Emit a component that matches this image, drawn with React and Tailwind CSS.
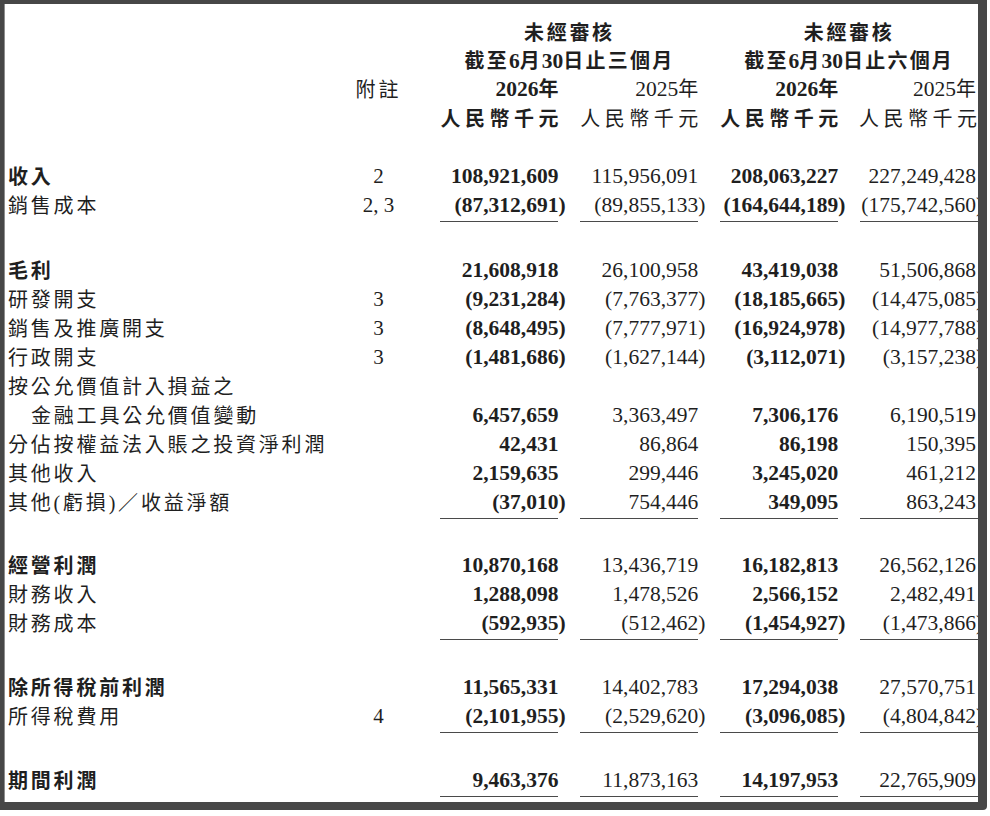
import React from "react";

const FONT = { fontFamily: '"Liberation Serif", "Noto Sans CJK TC", serif' };

const sections = [
  {
    gap: 34,
    rows: [
      { label: "收入", bold: true, note: "2", v: ["108,921,609", "115,956,091", "208,063,227", "227,249,428"] },
      { label: "銷售成本", note: "2, 3", v: ["(87,312,691)", "(89,855,133)", "(164,644,189)", "(175,742,560)"] },
    ],
  },
  {
    gap: 32,
    rows: [
      { label: "毛利", bold: true, v: ["21,608,918", "26,100,958", "43,419,038", "51,506,868"] },
      { label: "研發開支", note: "3", v: ["(9,231,284)", "(7,763,377)", "(18,185,665)", "(14,475,085)"] },
      { label: "銷售及推廣開支", note: "3", v: ["(8,648,495)", "(7,777,971)", "(16,924,978)", "(14,977,788)"] },
      { label: "行政開支", note: "3", v: ["(1,481,686)", "(1,627,144)", "(3,112,071)", "(3,157,238)"] },
      { label: "按公允價值計入損益之", v: ["", "", "", ""] },
      { label: "金融工具公允價值變動", indent: true, v: ["6,457,659", "3,363,497", "7,306,176", "6,190,519"] },
      { label: "分佔按權益法入賬之投資淨利潤", v: ["42,431", "86,864", "86,198", "150,395"] },
      { label: "其他收入", v: ["2,159,635", "299,446", "3,245,020", "461,212"] },
      { label: "其他(虧損)／收益淨額", v: ["(37,010)", "754,446", "349,095", "863,243"] },
    ],
  },
  {
    gap: 33,
    rows: [
      { label: "經營利潤", bold: true, v: ["10,870,168", "13,436,719", "16,182,813", "26,562,126"] },
      { label: "財務收入", v: ["1,288,098", "1,478,526", "2,566,152", "2,482,491"] },
      { label: "財務成本", v: ["(592,935)", "(512,462)", "(1,454,927)", "(1,473,866)"] },
    ],
  },
  {
    gap: 33,
    rows: [
      { label: "除所得稅前利潤", bold: true, v: ["11,565,331", "14,402,783", "17,294,038", "27,570,751"] },
      { label: "所得稅費用", note: "4", v: ["(2,101,955)", "(2,529,620)", "(3,096,085)", "(4,804,842)"] },
    ],
  },
  {
    gap: 0,
    rows: [
      { label: "期間利潤", bold: true, v: ["9,463,376", "11,873,163", "14,197,953", "22,765,909"] },
    ],
  },
];

const colW = ["w-[138px]", "w-[140px]", "w-[140px]", "w-[140px] pr-[2px]"];
const lineW = ["w-[138px]", "w-[140px]", "w-[140px]", "w-[140px]"];

function Num({ value, bold }) {
  if (!value) return null;
  const neg = value.endsWith(")");
  const body = neg ? value.slice(0, -1) : value;
  return (
    <span className={`whitespace-nowrap text-[21.5px] ${bold ? "font-bold" : "font-normal"}`}>
      {body}
      {neg && <span className="inline-block w-0">)</span>}
    </span>
  );
}

function DataRow({ row }) {
  return (
    <div className="flex h-[29px] items-center text-[20px] leading-none text-[#1f1f1f]">
      <div
        className={`w-[332px] pl-[3px] whitespace-nowrap tracking-[2.8px] ${row.bold ? "font-bold" : "font-normal"}`}
      >
        <span className={row.indent ? "ml-[23px]" : ""}>{row.label}</span>
      </div>
      <div className="w-[84px] text-center whitespace-nowrap text-[21px]">{row.note || ""}</div>
      {row.v.map((val, i) => (
        <div key={i} className={`${colW[i]} flex justify-end`}>
          <Num value={val} bold={i % 2 === 0} />
        </div>
      ))}
    </div>
  );
}

function Underline() {
  return (
    <div className="flex mt-[1px]">
      <div className="w-[332px]" />
      <div className="w-[84px]" />
      {lineW.map((w, i) => (
        <div key={i} className={`${w} flex justify-end`}>
          <div className="w-[118px] h-px bg-[#4a4a4a]" />
        </div>
      ))}
    </div>
  );
}

function Spread({ text, bold }) {
  return (
    <div className={`w-[118px] flex justify-between ${bold ? "font-bold" : "font-normal"}`}>
      {text.split("").map((c, i) => (
        <span key={i}>{c}</span>
      ))}
    </div>
  );
}

function Year({ y, bold }) {
  return (
    <span className={`whitespace-nowrap ${bold ? "font-bold" : "font-normal"}`}>
      <span className="text-[21.5px]">{y}</span>年
    </span>
  );
}

function Header() {
  return (
    <div className="pt-[15px] text-[20px] leading-none text-[#1f1f1f]">
      <div className="flex h-[28px] items-center font-bold">
        <div className="w-[416px]" />
        <div className="w-[278px] pl-[20px] flex justify-center tracking-[2.7px]">未經審核</div>
        <div className="w-[280px] pl-[22px] flex justify-center tracking-[2.7px]">未經審核</div>
      </div>
      <div className="flex h-[29px] items-center font-bold">
        <div className="w-[416px]" />
        <div className="w-[278px] pl-[20px] flex justify-center tracking-[2.2px] whitespace-nowrap">
          截至<span className="text-[21.5px] tracking-normal">6</span>月<span className="text-[21.5px] tracking-normal">30</span>日止三個月
        </div>
        <div className="w-[280px] pl-[22px] flex justify-center tracking-[2.2px] whitespace-nowrap">
          截至<span className="text-[21.5px] tracking-normal">6</span>月<span className="text-[21.5px] tracking-normal">30</span>日止六個月
        </div>
      </div>
      <div className="flex h-[28px] items-center">
        <div className="w-[332px]" />
        <div className="w-[84px] text-center tracking-[3px]">附註</div>
        <div className="w-[138px] flex justify-end">
          <Year y="2026" bold />
        </div>
        <div className="w-[140px] flex justify-end">
          <Year y="2025" />
        </div>
        <div className="w-[140px] flex justify-end">
          <Year y="2026" bold />
        </div>
        <div className="w-[140px] flex justify-end pr-[2px]">
          <Year y="2025" />
        </div>
      </div>
      <div className="flex h-[29px] items-center">
        <div className="w-[332px]" />
        <div className="w-[84px]" />
        <div className="w-[138px] flex justify-end">
          <Spread text="人民幣千元" bold />
        </div>
        <div className="w-[140px] flex justify-end">
          <Spread text="人民幣千元" />
        </div>
        <div className="w-[140px] flex justify-end">
          <Spread text="人民幣千元" bold />
        </div>
        <div className="w-[140px] flex justify-end pr-[1px]">
          <Spread text="人民幣千元" />
        </div>
      </div>
      <div className="h-[29px]" />
    </div>
  );
}

export default function App() {
  return (
    <div className="w-[990px] h-[816px] bg-white overflow-hidden" style={FONT}>
      <div className="w-[987px] h-[810px] bg-[#474747] rounded-br-[4px] pt-[4px] pl-[4px]">
        <div className="w-[974px] h-[798px] bg-white border-l border-[#8e8e8e] overflow-hidden">
          <Header />
          {sections.map((s, si) => (
            <div key={si}>
              {s.rows.map((r, ri) => (
                <DataRow key={ri} row={r} />
              ))}
              <Underline />
              {s.gap > 0 && <div style={{ height: s.gap }} />}
            </div>
          ))}
        </div>
      </div>
    </div>
  );
}
